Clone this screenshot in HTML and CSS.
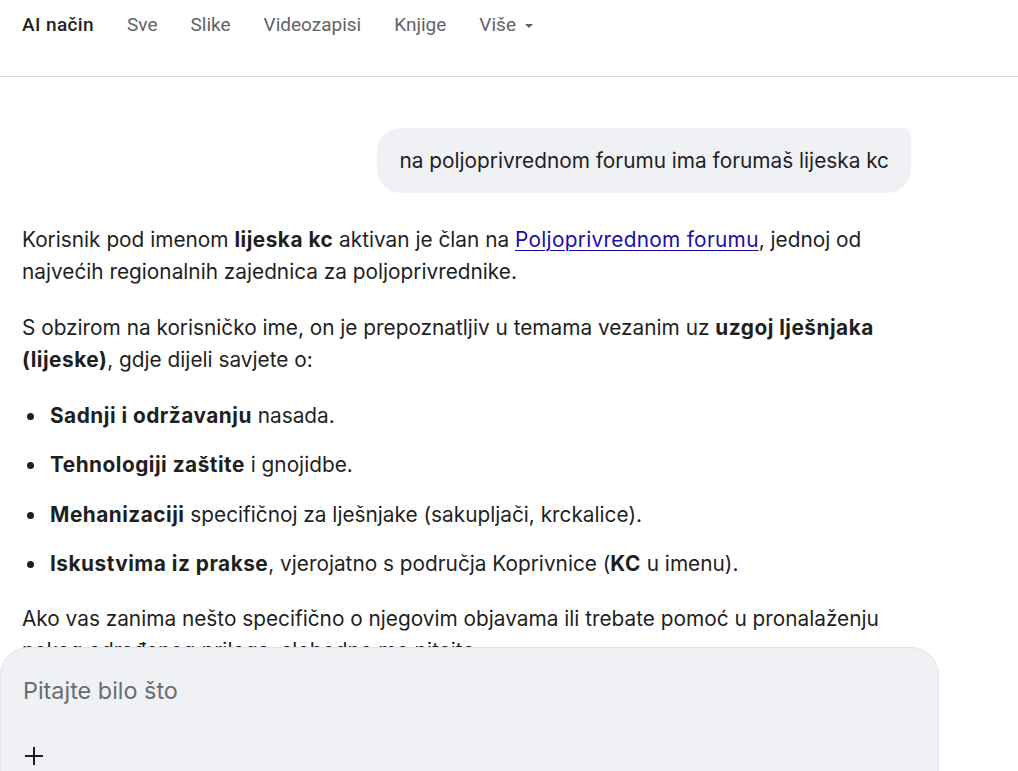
FILE: index.html
```html
<!DOCTYPE html>
<html lang="hr">
<head>
<meta charset="UTF-8">
<meta name="viewport" content="width=device-width, initial-scale=1.0">
<title>AI način</title>
<link rel="stylesheet" href="styles.css">
</head>
<body>

<div class="tabs">
  <a href="" class="tab active">AI način</a>
  <a href="" class="tab">Sve</a>
  <a href="" class="tab">Slike</a>
  <a href="" class="tab">Videozapisi</a>
  <a href="" class="tab">Knjige</a>
  <a href="" class="tab more">Više <span class="caret"></span></a>
</div>

<div class="chat">
  <div class="query_row">
    <div class="query">na poljoprivrednom forumu ima forumaš lijeska kc</div>
  </div>

  <div class="answer">
    <p>Korisnik pod imenom <b>lijeska kc</b> aktivan je član na <a href="">Poljoprivrednom forumu</a>, jednoj od najvećih regionalnih zajednica za poljoprivrednike.</p>
    <p>S obzirom na korisničko ime, on je prepoznatljiv u temama vezanim uz <b>uzgoj lješnjaka (lijeske)</b>, gdje dijeli savjete o:</p>
    <ul>
      <li><b>Sadnji i održavanju</b> nasada.</li>
      <li><b>Tehnologiji zaštite</b> i gnojidbe.</li>
      <li><b>Mehanizaciji</b> specifičnoj za lješnjake (sakupljači, krckalice).</li>
      <li><b>Iskustvima iz prakse</b>, vjerojatno s područja Koprivnice (<b>KC</b> u imenu).</li>
    </ul>
    <p>Ako vas zanima nešto specifično o njegovim objavama ili trebate pomoć u pronalaženju nekog određenog priloga, slobodno me pitajte.</p>
  </div>
</div>

<div class="composer">
  <div class="placeholder">Pitajte bilo što</div>
  <div class="plus">
    <svg width="20" height="20" viewBox="0 0 20 20"><path d="M10 1v18M1 10h18" stroke="#1f1f1f" stroke-width="2" fill="none"/></svg>
  </div>
</div>

</body>
</html>
```

FILE: styles.css
```css
* {margin:0; padding:0; box-sizing: border-box;}
body {width: 1018px; height: 771px; overflow: hidden; position: relative; font-family: Inter, Roboto, "Noto Sans", sans-serif; color: #1f1f1f; background: #fff;}
a {text-decoration: none;}

.tabs {height: 77px; border-bottom: 1px solid #dadce0; display: flex; align-items: flex-start; padding: 12px 0 0 22px; font-family: Roboto, Arial, sans-serif;}
.tabs .tab {font-size: 19px; line-height: 26px; color: #5f6368; margin-right: 33px; display: flex; align-items: center;}
.tabs .tab.active {color: #1f1f1f; font-weight: 500; letter-spacing: 0.4px;}
.tabs .caret {display: inline-block; width: 0; height: 0; border-left: 4px solid transparent; border-right: 4px solid transparent; border-top: 4px solid #5f6368; margin-left: 9px; margin-top: 2px;}

.chat {padding: 0 22px;}
.query_row {display: flex; justify-content: flex-end; padding: 51px 85px 0 0;}
.query {background: #f0f1f5; border-radius: 24px 8px 24px 24px; font-size: 20.8px; line-height: 26px; padding: 20px 22px 19px 22px; color: #1f1f1f;}

.answer {padding-top: 31px; width: 870px; font-size: 20.8px; line-height: 32px;}
.answer p {margin-bottom: 24px;}
.answer b {font-weight: 700; letter-spacing: 0.5px;}
.answer a {color: #1a0dab; letter-spacing: 0.3px; text-decoration: underline; text-underline-offset: 3px; text-decoration-thickness: 1px;}
.answer ul {margin-bottom: 23px;}
.answer li {list-style: none; position: relative; padding-left: 28px; margin-bottom: 17.4px;}
.answer li::before {content: ""; position: absolute; left: 5px; top: 13px; width: 7px; height: 7px; border-radius: 50%; background: #1f1f1f;}

.composer {position: absolute; left: 0; top: 647px; width: 939px; height: 140px; background: #f0f1f5; border: 1px solid #e3e4ea; border-radius: 28px 28px 0 0; padding: 28px 0 0 22px;}
.composer .placeholder {font-size: 23.4px; line-height: 30px; color: #6a6d72;}
.composer .plus {margin-top: 40px; margin-left: 1px; height: 20px;}
.composer .plus svg {display: block;}
```
